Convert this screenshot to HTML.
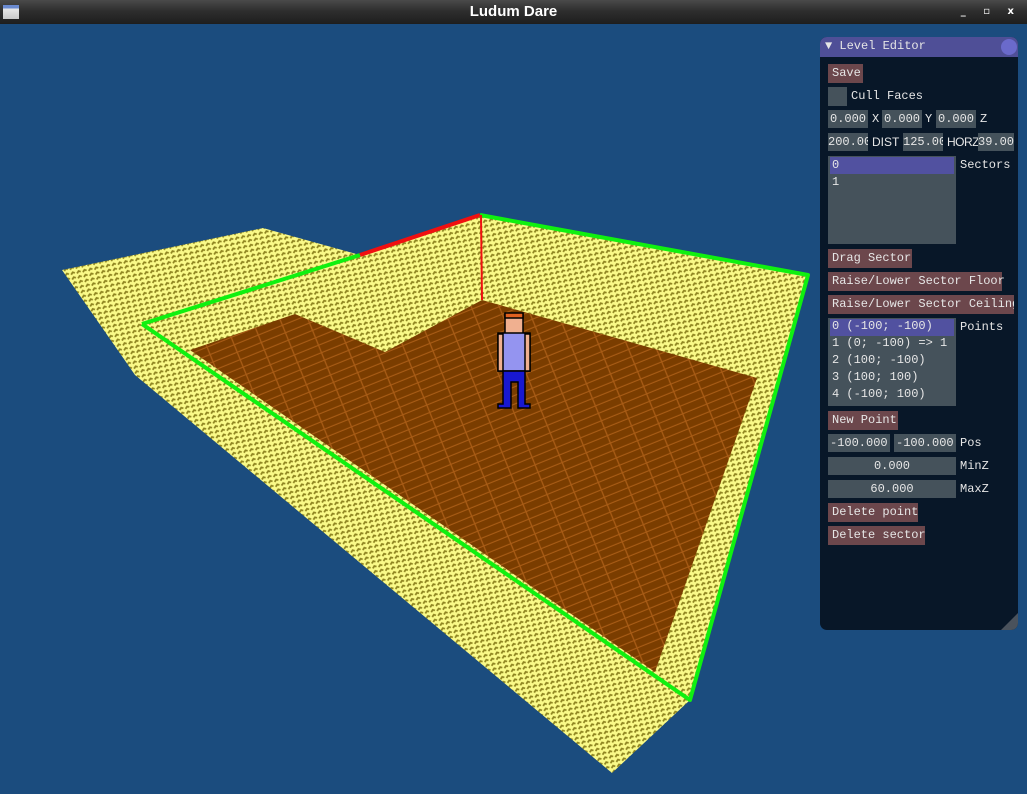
<!DOCTYPE html>
<html><head><meta charset="utf-8"><style>
*{margin:0;padding:0;box-sizing:border-box}
body{width:1027px;height:794px;overflow:hidden;background:#1b4c7e;position:relative;font-family:"Liberation Mono",monospace}
#tb{position:absolute;left:0;top:0;width:1027px;height:24px;background:linear-gradient(#4a4a4a,#2e2e2e 45%,#1e1e1e);color:#fff;font:bold 15px "Liberation Sans",sans-serif;text-align:center;line-height:24px}
#tb .ic{position:absolute;left:3px;top:5px;width:16px;height:14px;background:linear-gradient(#6a8ad0 0,#6a8ad0 25%,#e8e8e8 25%,#c8c8c8)}
#tb .ctl{position:absolute;right:6px;top:0;font-size:10px;letter-spacing:7px;font-family:"DejaVu Sans",sans-serif}
#scene{position:absolute;left:0;top:24px}
#p{position:absolute;left:820px;top:37px;width:198px;height:593px;background:#081728;border-radius:7px;overflow:hidden}
.a{position:absolute;color:#e6e6e6;font-size:12px;line-height:19px;white-space:pre}
.b{position:absolute;background:#6c474c;height:19px;padding-left:4px}
.f{position:absolute;background:#45525b;height:18px}
</style></head><body>
<div id="tb"><div class="ic"></div>Ludum Dare<span class="ctl">_ ▫ x</span></div>
<svg id="scene" width="1027" height="770" viewBox="0 24 1027 770">
<defs>
<pattern id="y" width="6" height="5" patternUnits="userSpaceOnUse" patternTransform="rotate(-12)">
<rect width="6" height="5" fill="#fafa88"/><path d="M0.5 3.5 L2.5 1.5 L4.5 2.5" stroke="#8e8420" stroke-width="1.8" fill="none"/></pattern>
<pattern id="w" width="26" height="8" patternUnits="userSpaceOnUse" patternTransform="rotate(-22)">
<rect width="26" height="8" fill="#7a3d00"/><path d="M0 7.5 H26 M10 0 V8" stroke="#a85c16" stroke-width="1.3"/></pattern>
</defs>
<polygon points="62,270 263,228 360,255 480,215 808,275 690,700 612,773 135,375" fill="url(#y)"/>
<polygon points="190,350 295,314 385,352 482,300 757,378 655,672" fill="url(#w)"/>
<polyline points="142,324 360,255" stroke="#10f010" stroke-width="4" fill="none"/>
<polyline points="360,255 480,215" stroke="#f01010" stroke-width="4" fill="none"/>
<polyline points="480,215 808,275 690,700 142,324" stroke="#10f010" stroke-width="4" fill="none" stroke-linejoin="round"/>
<line x1="481" y1="215" x2="482" y2="300" stroke="#f01010" stroke-width="2"/>
<g stroke="#000" stroke-width="1.5">
<rect x="505" y="314" width="18" height="22" fill="#f0b090"/>
<rect x="505" y="313" width="18" height="5" fill="#e06020"/>
<rect x="498" y="333" width="32" height="38" fill="#9494f0"/>
<rect x="498" y="334" width="5" height="37" fill="#f0b090"/>
<rect x="525" y="334" width="5" height="37" fill="#f0b090"/>
<path d="M503 371 H525 V404 H530 V408 H518 V382 H511 V408 H498 V404 H503 Z" fill="#1818d0"/>
</g>
</svg>
<div id="p">
<div style="position:absolute;left:0;top:0;width:198px;height:20px;background:#4f4f97"></div>
<div class="a" style="left:5px;top:0">▼ Level Editor</div>
<div style="position:absolute;left:181px;top:2px;width:16px;height:16px;border-radius:50%;background:#6a6acb"></div>
<div class="b a" style="left:8px;top:27px;width:35px">Save</div>
<div class="f" style="left:8px;top:50px;width:19px;height:19px"></div>
<div class="a" style="left:31px;top:50px">Cull Faces</div>
<div class="f a" style="left:8px;top:73px;width:40px;padding-left:2px">0.000</div><div class="a" style="left:52px;top:73px">X</div>
<div class="f a" style="left:62px;top:73px;width:40px;padding-left:2px">0.000</div><div class="a" style="left:105px;top:73px">Y</div>
<div class="f a" style="left:116px;top:73px;width:40px;padding-left:2px">0.000</div><div class="a" style="left:160px;top:73px">Z</div>
<div class="f a" style="left:8px;top:96px;width:40px;overflow:hidden">200.00</div><div class="a" style="left:52px;top:96px;font-family:'Liberation Sans',sans-serif;font-size:12px">DIST</div>
<div class="f a" style="left:83px;top:96px;width:40px;overflow:hidden">125.00</div><div class="a" style="left:127px;top:96px;font-family:'Liberation Sans',sans-serif;font-size:12px;letter-spacing:-0.5px">HORZ</div>
<div class="f a" style="left:158px;top:96px;width:36px;overflow:hidden">39.00</div>
<div class="f" style="left:8px;top:119px;width:128px;height:88px"></div>
<div style="position:absolute;left:10px;top:120px;width:124px;height:17px;background:#5151a0"></div>
<div class="a" style="left:12px;top:119px">0</div><div class="a" style="left:12px;top:136px">1</div>
<div class="a" style="left:140px;top:119px">Sectors</div>
<div class="b a" style="left:8px;top:212px;width:84px">Drag Sector</div>
<div class="b a" style="left:8px;top:235px;width:174px">Raise/Lower Sector Floor</div>
<div class="b a" style="left:8px;top:258px;width:186px;overflow:hidden">Raise/Lower Sector Ceiling</div>
<div class="f" style="left:8px;top:281px;width:128px;height:88px"></div>
<div style="position:absolute;left:10px;top:282px;width:124px;height:17px;background:#5151a0"></div>
<div class="a" style="left:12px;top:281px;line-height:17px">0 (-100; -100)
1 (0; -100) =&gt; 1
2 (100; -100)
3 (100; 100)
4 (-100; 100)</div>
<div class="a" style="left:140px;top:281px">Points</div>
<div class="b a" style="left:8px;top:374px;width:70px">New Point</div>
<div class="f a" style="left:8px;top:397px;width:62px;padding-left:2px">-100.000</div>
<div class="f a" style="left:74px;top:397px;width:62px;padding-left:2px">-100.000</div>
<div class="a" style="left:140px;top:397px">Pos</div>
<div class="f a" style="left:8px;top:420px;width:128px;text-align:center">0.000</div><div class="a" style="left:140px;top:420px">MinZ</div>
<div class="f a" style="left:8px;top:443px;width:128px;text-align:center">60.000</div><div class="a" style="left:140px;top:443px">MaxZ</div>
<div class="b a" style="left:8px;top:466px;width:90px">Delete point</div>
<div class="b a" style="left:8px;top:489px;width:97px">Delete sector</div>
<div style="position:absolute;right:0;bottom:0;width:0;height:0;border-style:solid;border-width:0 0 17px 17px;border-color:transparent transparent #4a525c transparent"></div>
</div>
</body></html>
